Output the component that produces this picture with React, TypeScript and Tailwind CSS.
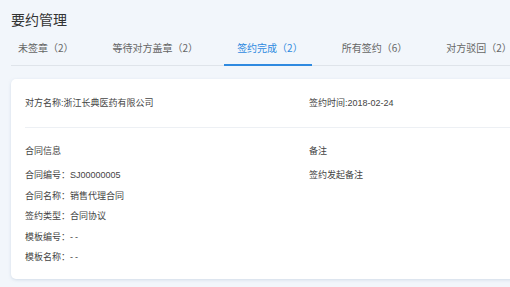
const tabs = [
  { label: "未签章（2）" },
  { label: "等待对方盖章（2）" },
  { label: "签约完成（2）", active: true },
  { label: "所有签约（6）" },
  { label: "对方驳回（2）" },
];

const info = [
  ["合同编号：", "SJ00000005"],
  ["合同名称：", "销售代理合同"],
  ["签约类型：", "合同协议"],
  ["模板编号：", "--"],
  ["模板名称：", "--"],
];

export default function App() {
  return (
    <div
      className="w-[510px] h-[287px] overflow-hidden bg-[#f2f6fb] text-[#333]"
      style={{ fontFamily: '"Liberation Sans", "Noto Sans CJK SC", sans-serif' }}
    >
      <h1 className="pl-[11px] pt-[10px] text-[14px] leading-[20px] text-[#333]">
        要约管理
      </h1>

      <div className="ml-[11px] border-b border-[#dfe4ea] flex whitespace-nowrap">
        <div
          className="flex gap-[17px] -ml-[6px]"
          style={{ fontFamily: '"Noto Sans CJK SC", sans-serif' }}
        >
          {tabs.map((t) => (
            <div
              key={t.label}
              className={`pl-[13px] pr-[9px] h-[36px] flex items-center text-[10px] -mb-px ${
                t.active
                  ? "text-[#2f8ae0] border-b-2 border-[#2f8ae0]"
                  : "text-[#666] border-b-2 border-transparent"
              }`}
            >
              {t.label}
            </div>
          ))}
        </div>
      </div>

      <div className="ml-[11px] mt-[13px] w-[520px] h-[200px] bg-white rounded-[5px] shadow-[0_1px_3px_rgba(180,195,215,0.5)] text-[9px] text-[#444]">
        <div className="flex h-[48px] items-start pt-[17px] px-[14px] leading-[14px]">
          <div className="w-[284px]">对方名称:浙江长典医药有限公司</div>
          <div>签约时间:2018-02-24</div>
        </div>
        <div className="ml-[14px] border-t border-[#edf0f4]" />
        <div className="flex px-[14px] pt-[16px]">
          <div className="w-[284px]">
            <div className="leading-[14px]">合同信息</div>
            <div className="mt-[10px] flex flex-col gap-[6.5px]">
              {info.map(([k, v]) => (
                <div key={k} className="leading-[14px]">
                  {k}
                  <span className={v === "--" ? "tracking-[2px]" : ""}>{v}</span>
                </div>
              ))}
            </div>
          </div>
          <div>
            <div className="leading-[14px]">备注</div>
            <div className="mt-[10px] leading-[14px]">签约发起备注</div>
          </div>
        </div>
      </div>
    </div>
  );
}
